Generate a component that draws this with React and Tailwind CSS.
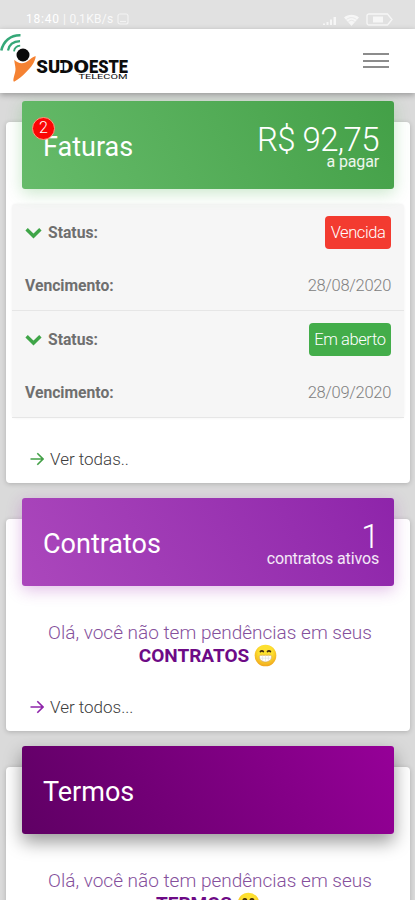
import React from 'react';

const INVOICES = [
  { id: 1, status: 'Vencida', due: '28/08/2020', badge: 'bg-[#f33b30]' },
  { id: 2, status: 'Em aberto', due: '28/09/2020', badge: 'bg-[#43ad4a]' },
];

const StatusBar = () => (
  <div className="flex h-[29px] items-end justify-between bg-[#e1e1e1] pr-[22px] pb-[3px] pl-[26px] text-white">
    <div className="flex items-center gap-[3px] text-[12px] leading-[14px] tracking-[0.3px]">
      <span className="tracking-[0.8px]">18:40</span>
      <span className="whitespace-pre opacity-80">| 0,1KB/s</span>
      <svg width="12" height="12" viewBox="0 0 12 12" fill="none" stroke="currentColor" strokeWidth="1.2" opacity="0.6">
        <rect x="1" y="1" width="10" height="10" rx="2" />
        <path d="M3 8.5h6" />
      </svg>
    </div>
    <div className="flex items-center gap-[7px] opacity-70">
      <svg width="14" height="12" viewBox="0 0 14 12" fill="currentColor">
        <path d="M0 9.5h2V11H0zM3.5 8h2v3h-2zM7 5.5h2V11H7zM10.500 3h2.500v8h-2.500z" />
      </svg>
      <svg width="15" height="12" viewBox="0 0 15 12" fill="currentColor">
        <path d="M0 3.500C4-.3 11-.3 15 3.500L7.500 12z" />
        <path d="M2.500 5.500c3-2.500 7-2.500 10 0M4.500 7.500c2-1.500 4-1.500 6 0" fill="none" stroke="#e1e1e1" strokeWidth="0.7" />
      </svg>
      <svg width="27" height="13" viewBox="0 0 27 13" fill="none" stroke="currentColor" strokeWidth="1.400">
        <path d="M3 1h18.500L26 6.500 21.500 12H3a2 2 0 0 1-2-2V3a2 2 0 0 1 2-2z" />
        <rect x="7" y="3.500" width="10" height="6" fill="currentColor" stroke="none" />
      </svg>
    </div>
  </div>
);

const Logo = () => (
  <svg width="132" height="60" viewBox="0 29 132 60" className="block">
    <g fill="none" stroke="#35a878">
      <path d="M1.300 50.500C3.500 41 10.500 35 20.500 35.300" strokeWidth="2.600" />
      <path d="M8 50.500c1-5.500 5-9 12-9.300" strokeWidth="2.200" />
      <path d="M14 51.300c.4-3.200 2.600-5.400 6.200-5.700" strokeWidth="1.800" />
    </g>
    <path d="M14.300 60.800c4 4.600 10.700 4.700 15.500-.2 2-2 4.300-3.200 6-3.300-.8 6.200-5.300 11.600-9.800 16-3.500 3.500-7.500 7.500-12 9.400-2-1.500 1.600-8.200 1.500-12.700-.1-3.500-1.200-6-1.200-9.200z" fill="#f58232" transform="translate(0 -1)" />
    <circle cx="23" cy="55" r="6.500" fill="#0a0a0a" />
    <g fill="#0c0c0c" fontFamily="Roboto, sans-serif">
      <text y="73" fontSize="18.500" fontWeight="900">
        <tspan x="36.300" textLength="24" lengthAdjust="spacingAndGlyphs">SU</tspan>
        <tspan x="59" textLength="30" lengthAdjust="spacingAndGlyphs">DO</tspan>
        <tspan x="89" textLength="39" lengthAdjust="spacingAndGlyphs">ESTE</tspan>
      </text>
      {/* opens the stem of the D */}
      <path d="M59.500 63h3.200v7h-3.200z" fill="#fff" />
      <text x="78.500" y="79" fontSize="6.500" fontWeight="400" textLength="49" lengthAdjust="spacingAndGlyphs">TELECOM</text>
    </g>
  </svg>
);

const NavBar = () => (
  <header className="relative z-10 flex h-[64px] items-start justify-between bg-white pr-[26px] shadow-[0_2px_6px_rgba(0,0,0,0.3)]">
    <Logo />
    <div className="mt-[24px] flex w-[26px] flex-col gap-[4.500px]">
      <span className="h-[2px] bg-[#8c8c8c]" />
      <span className="h-[2px] bg-[#8c8c8c]" />
      <span className="h-[2px] bg-[#8c8c8c]" />
    </div>
  </header>
);

const Grin = () => (
  <svg width="23" height="23" viewBox="0 0 24 24" className="ml-[5px] inline-block align-[-5px]">
    <defs>
      <radialGradient id="face" cx="0.500" cy="0.350" r="0.650">
        <stop offset="0.500" stopColor="#fde030" />
        <stop offset="1" stopColor="#f0a51e" />
      </radialGradient>
    </defs>
    <circle cx="12" cy="12" r="11.300" fill="url(#face)" />
    <path d="M6.800 7.800c.6-.8 2.200-.8 2.800 0M14.200 7.800c.6-.8 2.200-.8 2.800 0" fill="none" stroke="#422b0d" strokeWidth="2" strokeLinecap="round" />
    <path d="M5.500 13.200c0-1 .6-1.500 1.600-1.500h9.800c1 0 1.600.5 1.600 1.500 0 3.200-2.700 5.600-6.500 5.600s-6.500-2.400-6.500-5.600z" fill="#fff" stroke="#d9a441" strokeWidth="0.800" />
    <path d="M5.800 14.800h12.400M9 11.800v6M12 11.800v7M15 11.800v6" stroke="#dcdcdc" strokeWidth="0.600" />
  </svg>
);

const Arrow = ({ color }) => (
  <svg width="14" height="14" viewBox="0 0 14 14" fill="none" stroke={color} strokeWidth="1.600">
    <path d="M.5 7h12M7.300 1.300 13 7l-5.700 5.700" />
  </svg>
);

const Chevron = () => (
  <svg width="17" height="12" viewBox="0 0 18 12" fill="none" stroke="#3fa548" strokeWidth="3.600">
    <path d="M1.700 2 9 9.200 16.300 2" />
  </svg>
);

const Card = ({ title, value, caption, badge, headerClass, className, children }) => (
  <section className={`mr-[5px] ml-[6px] rounded-[4px] bg-white shadow-[0_1px_5px_rgba(0,0,0,0.2)] ${className}`}>
    <div className={`relative -top-[21.500px] mx-[16px] -mb-[22px] flex h-[88px] items-start justify-between rounded-[3px] pr-[15px] pl-[21px] text-white ${headerClass}`}>
      <h2 className="mt-[30px] text-[27px] leading-[32px]">{title}</h2>
      {badge && (
        <span className="absolute top-[16px] left-[10px] flex size-[23px] items-center justify-center rounded-full border border-[#ff9a80] bg-[#fb0505] text-[16px] leading-none font-light">
          {badge}
        </span>
      )}
      {value && (
        <div className="mt-[21px] flex flex-col items-end">
          <span className="text-[33px] leading-[36px] font-light tracking-[-0.600px]">{value}</span>
          <span className="-mt-[5px] text-[16px] leading-[18px] tracking-[-0.150px] text-white/90">{caption}</span>
        </div>
      )}
    </div>
    {children}
  </section>
);

const SeeAll = ({ color, children }) => (
  <a className="flex items-center gap-[6px] pl-[24px] text-[17px] leading-[24px] font-light text-[#3c3c3c]">
    <Arrow color={color} />
    {children}
  </a>
);

const NoPending = ({ subject }) => (
  <p className="pt-[37px] pl-[4px] text-center text-[19px] leading-[22px] font-light text-[#85509c]">
    Olá, você não tem pendências em seus
    <br />
    <span className="relative -left-[2px]">
      <b className="font-bold text-[#6d0a86]">{subject}</b>
      <Grin />
    </span>
  </p>
);

const App = () => (
  <div className="h-[900px] w-[415px] overflow-hidden bg-[#dadada] font-[Roboto,sans-serif]">
    <StatusBar />
    <NavBar />
    <main>
      <Card
        title="Faturas"
        value="R$ 92,75"
        caption="a pagar"
        badge="2"
        className="mt-[29px] h-[361px]"
        headerClass="bg-linear-60 from-[#66bb6a] to-[#43a047] shadow-[0_4px_16px_rgba(76,175,80,0.300)]"
      >
        <ul className="mx-[6px] mt-[16px] rounded-[4px] bg-[#f6f6f6] text-[15.700px] leading-[20px] text-[#6f6f6f] shadow-[0_0_3px_rgba(0,0,0,0.06)]">
          {INVOICES.map(inv => (
            <li key={inv.id} className="h-[107px] border-b border-[#e6e6e6] pr-[13px] pl-[13px]">
              <div className="flex h-[57px] items-center justify-between">
                <span className="flex items-center gap-[6px] font-bold">
                  <Chevron />
                  Status:
                </span>
                <span className={`rounded-[4px] px-[5.500px] py-[6.500px] text-[16.500px] leading-[20px] font-light tracking-[-0.400px] text-white ${inv.badge}`}>
                  {inv.status}
                </span>
              </div>
              <div className="flex h-[50px] items-center justify-between">
                <span className="font-bold">Vencimento:</span>
                <span className="text-[16.500px] font-light tracking-[-0.300px] text-[#808080]">{inv.due}</span>
              </div>
            </li>
          ))}
        </ul>
        <div className="pt-[29px]">
          <SeeAll color="#43a047">Ver todas..</SeeAll>
        </div>
      </Card>

      <Card
        title="Contratos"
        value="1"
        caption="contratos ativos"
        className="mt-[36px] h-[212px]"
        headerClass="bg-linear-60 from-[#ab47bc] to-[#8e24aa] shadow-[0_4px_16px_rgba(156,39,176,0.300)]"
      >
        <NoPending subject="CONTRATOS" />
        <div className="pt-[28px]">
          <SeeAll color="#8e24aa">Ver todos...</SeeAll>
        </div>
      </Card>

      <Card
        title="Termos"
        className="mt-[36px] h-[212px]"
        headerClass="bg-linear-60 from-[#5f0064] to-[#960098] shadow-[0_8px_18px_rgba(0,0,0,0.400)]"
      >
        <NoPending subject="TERMOS" />
      </Card>
    </main>
  </div>
);

export default App;
